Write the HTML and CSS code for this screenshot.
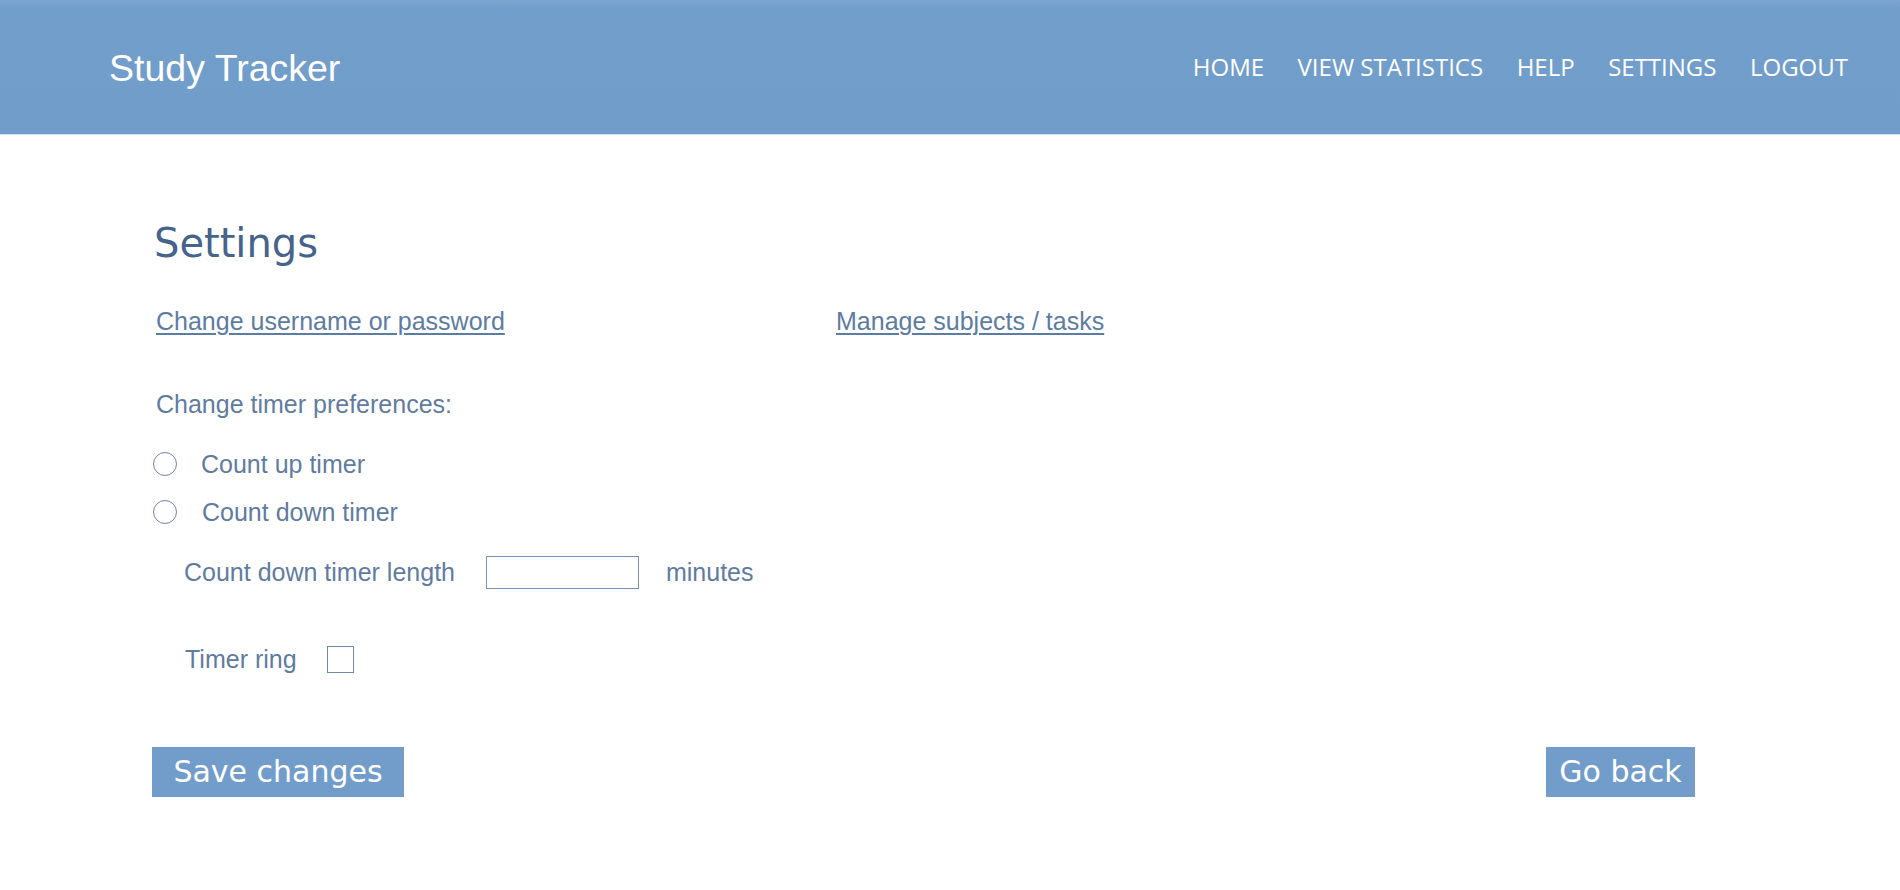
FILE: index.html
```html
<!DOCTYPE html>
<html lang="en">
<head>
<meta charset="utf-8">
<title>Study Tracker - Settings</title>
<link rel="stylesheet" href="styles.css">
</head>
<body>
<header class="topbar">
  <div class="brand">Study Tracker</div>
  <nav class="nav">
    <a class="nav-link" href="#">HOME</a>
    <a class="nav-link" href="#">VIEW STATISTICS</a>
    <a class="nav-link" href="#">HELP</a>
    <a class="nav-link" href="#">SETTINGS</a>
    <a class="nav-link" href="#">LOGOUT</a>
  </nav>
</header>
<main class="page">
  <h1 class="title">Settings</h1>
  <div class="links">
    <a class="link" href="#">Change username or password</a>
    <a class="link" href="#">Manage subjects / tasks</a>
  </div>
  <p class="label">Change timer preferences:</p>
  <div class="options">
    <label class="option"><input class="radio" type="radio" name="timer"><span>Count up timer</span></label>
    <label class="option"><input class="radio" type="radio" name="timer"><span>Count down timer</span></label>
  </div>
  <div class="length-row">
    <span>Count down timer length</span>
    <input class="length-input" type="text">
    <span>minutes</span>
  </div>
  <label class="ring-row"><span>Timer ring</span><input class="check" type="checkbox"></label>
  <div class="actions">
    <button class="btn btn-save" type="button">Save changes</button>
    <button class="btn btn-back" type="button">Go back</button>
  </div>
</main>
</body>
</html>
```

FILE: styles.css
```css
* { box-sizing: border-box; }

body {
  margin: 0;
  background: #ffffff;
  font-family: "Liberation Sans", Arial, sans-serif;
  color: #5f7ca0;
}

.topbar {
  height: 134px;
  display: flex;
  align-items: center;
  justify-content: space-between;
  padding: 0 52px 0 109px;
  background: linear-gradient(#7ba4cf 0, #729ecb 8px, #719dcb 100%);
  box-shadow: 0 1px 0 #d3e1f1;
}

.brand {
  font-family: "Liberation Sans", Arial, sans-serif;
  font-size: 37.5px;
  color: #ffffff;
  margin-top: 2px;
}

.nav {
  display: flex;
  gap: 33.5px;
  margin-top: -2px;
}

.nav-link {
  font-family: "Open Sans", sans-serif;
  font-size: 24px;
  color: #ffffff;
  text-decoration: none;
}

.page {
  padding: 85px 205px 0 152px;
}

.title {
  margin: 0 0 0 2px;
  font-family: "DejaVu Sans", sans-serif;
  font-weight: normal;
  font-size: 40px;
  line-height: 1.2;
  color: #45638b;
}

.links {
  margin-top: 39px;
  display: grid;
  grid-template-columns: 680px auto;
  font-size: 25px;
  line-height: 30px;
}

.link {
  justify-self: start;
  margin-left: 4px;
  color: #5d7ca1;
  text-decoration: underline;
  text-underline-offset: 3px;
  text-decoration-thickness: 2px;
}

.label {
  margin: 53px 0 0 4px;
  font-size: 25px;
  line-height: 30px;
}

.options {
  margin-top: 30px;
  display: flex;
  flex-direction: column;
  gap: 18px;
}

.option {
  display: flex;
  align-items: center;
  gap: 24px;
  height: 30px;
  font-size: 25px;
}

.option + .option span { margin-left: 1px; }

.radio {
  appearance: none;
  -webkit-appearance: none;
  width: 24px;
  height: 24px;
  margin: 0 0 0 1px;
  border: 1.5px solid #6c88ab;
  border-radius: 50%;
  background: #fff;
}

.length-row {
  margin-top: 29px;
  padding-left: 32px;
  display: flex;
  align-items: center;
  font-size: 25px;
}

.length-input {
  width: 153px;
  height: 33px;
  margin: 0 27px 0 31px;
  border: 1.5px solid #7a92b3;
  background: #fff;
  padding: 0;
}

.ring-row {
  margin-top: 56px;
  padding-left: 33px;
  display: flex;
  align-items: center;
  gap: 30px;
  font-size: 25px;
}

.check {
  appearance: none;
  -webkit-appearance: none;
  width: 27px;
  height: 27px;
  margin: 0;
  border: 1.5px solid #6f8aad;
  background: #fff;
}

.actions {
  margin-top: 73px;
  display: flex;
  justify-content: space-between;
}

.btn {
  height: 50px;
  border: none;
  padding: 0;
  background: #729dcb;
  color: #ffffff;
  font-family: "DejaVu Sans", sans-serif;
  font-size: 30px;
  line-height: 50px;
  text-align: center;
}

.btn-save { width: 252px; }
.btn-back { width: 149px; }
```
